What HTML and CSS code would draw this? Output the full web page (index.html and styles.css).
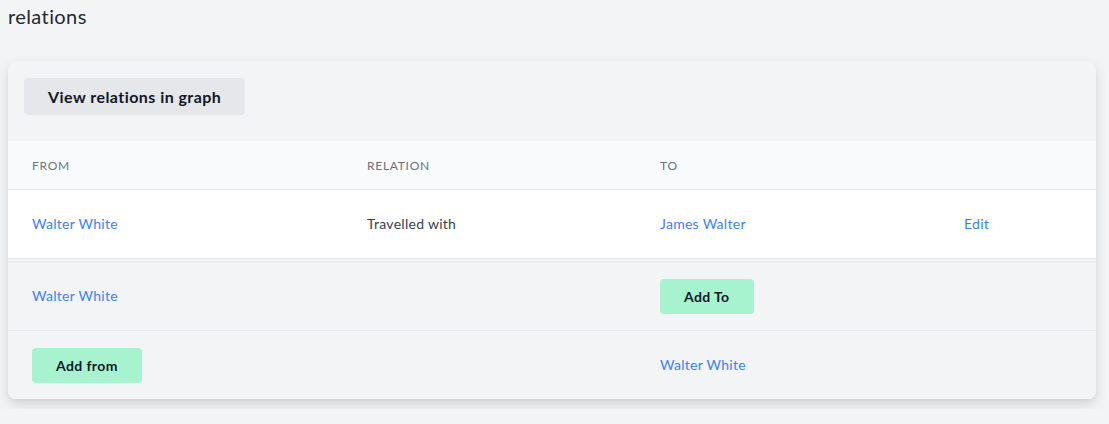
FILE: index.html
```html
<!DOCTYPE html>
<html>
<head>
<meta charset="utf-8">
<link rel="stylesheet" href="styles.css">
</head>
<body>
<div class="page">
  <h1 class="title">relations</h1>
  <div class="card">
    <div class="toolbar">
      <button class="btn btn-gray">View relations in graph</button>
    </div>
    <div class="row head">
      <div class="cell">From</div>
      <div class="cell">Relation</div>
      <div class="cell">To</div>
      <div class="cell"></div>
    </div>
    <div class="row white">
      <div class="cell tx"><a class="link">Walter White</a></div>
      <div class="cell tx text">Travelled with</div>
      <div class="cell tx"><a class="link">James Walter</a></div>
      <div class="cell tx"><a class="link">Edit</a></div>
    </div>
    <div class="row gray first">
      <div class="cell tx"><a class="link">Walter White</a></div>
      <div class="cell"></div>
      <div class="cell"><button class="btn btn-green">Add To</button></div>
      <div class="cell"></div>
    </div>
    <div class="row gray">
      <div class="cell"><button class="btn btn-green">Add from</button></div>
      <div class="cell"></div>
      <div class="cell tx"><a class="link">Walter White</a></div>
      <div class="cell"></div>
    </div>
  </div>
</div>
</body>
</html>
```
FILE: styles.css
```css
html, body {
  margin: 0;
  padding: 0;
  background: #f3f4f6;
  font-family: "Lato", "Open Sans", sans-serif;
  color: #1f2937;
}
.page {
  width: 1088px;
  padding: 0 9px 10px 8px;
  overflow: hidden;
}
.title {
  margin: 0;
  padding-top: 2px;
  font-size: 20px;
  line-height: 28px;
  font-weight: 400;
  letter-spacing: 0.02em;
  color: #1f2937;
  margin-bottom: 31px;
}
.card {
  background: #f3f4f6;
  border-radius: 8px;
  box-shadow: 0 6px 14px rgba(0, 0, 0, 0.12), 0 2px 4px rgba(0, 0, 0, 0.04);
  overflow: hidden;
}
.toolbar {
  padding: 17px 16px 26px;
  display: flex;
}
.btn {
  font-family: inherit;
  font-weight: 700;
  border: 0;
  border-radius: 4px;
  color: #111827;
  cursor: pointer;
  letter-spacing: 0.028em;
  white-space: nowrap;
}
.btn-gray {
  background: #e5e7eb;
  font-size: 16px;
  line-height: 21px;
  padding: 8px 24px;
}
.btn-green {
  background: #a7f3d0;
  font-size: 14px;
  line-height: 19px;
  padding: 8px 24px;
}
.row {
  display: grid;
  grid-template-columns: 335px 293px 304px 1fr;
  align-items: center;
}
.cell {
  padding: 0 24px;
  font-size: 14px;
  letter-spacing: 0.02em;
}
.tx {
  padding-bottom: 2px;
}
.head {
  height: 48px;
  background: #f9fafb;
  border-bottom: 1px solid #e5e7eb;
}
.head .cell {
  font-size: 12px;
  text-transform: uppercase;
  letter-spacing: 0.06em;
  color: #6b7280;
}
.white {
  height: 68px;
  background: #ffffff;
  border-bottom: 1px solid #e5e7eb;
  margin-bottom: 2px;
}
.gray {
  height: 68px;
  background: #f3f4f6;
  border-top: 1px solid #e5e7eb;
}
.link {
  color: #3b82f6;
  text-decoration: none;
}
.text {
  color: #374151;
}
```
